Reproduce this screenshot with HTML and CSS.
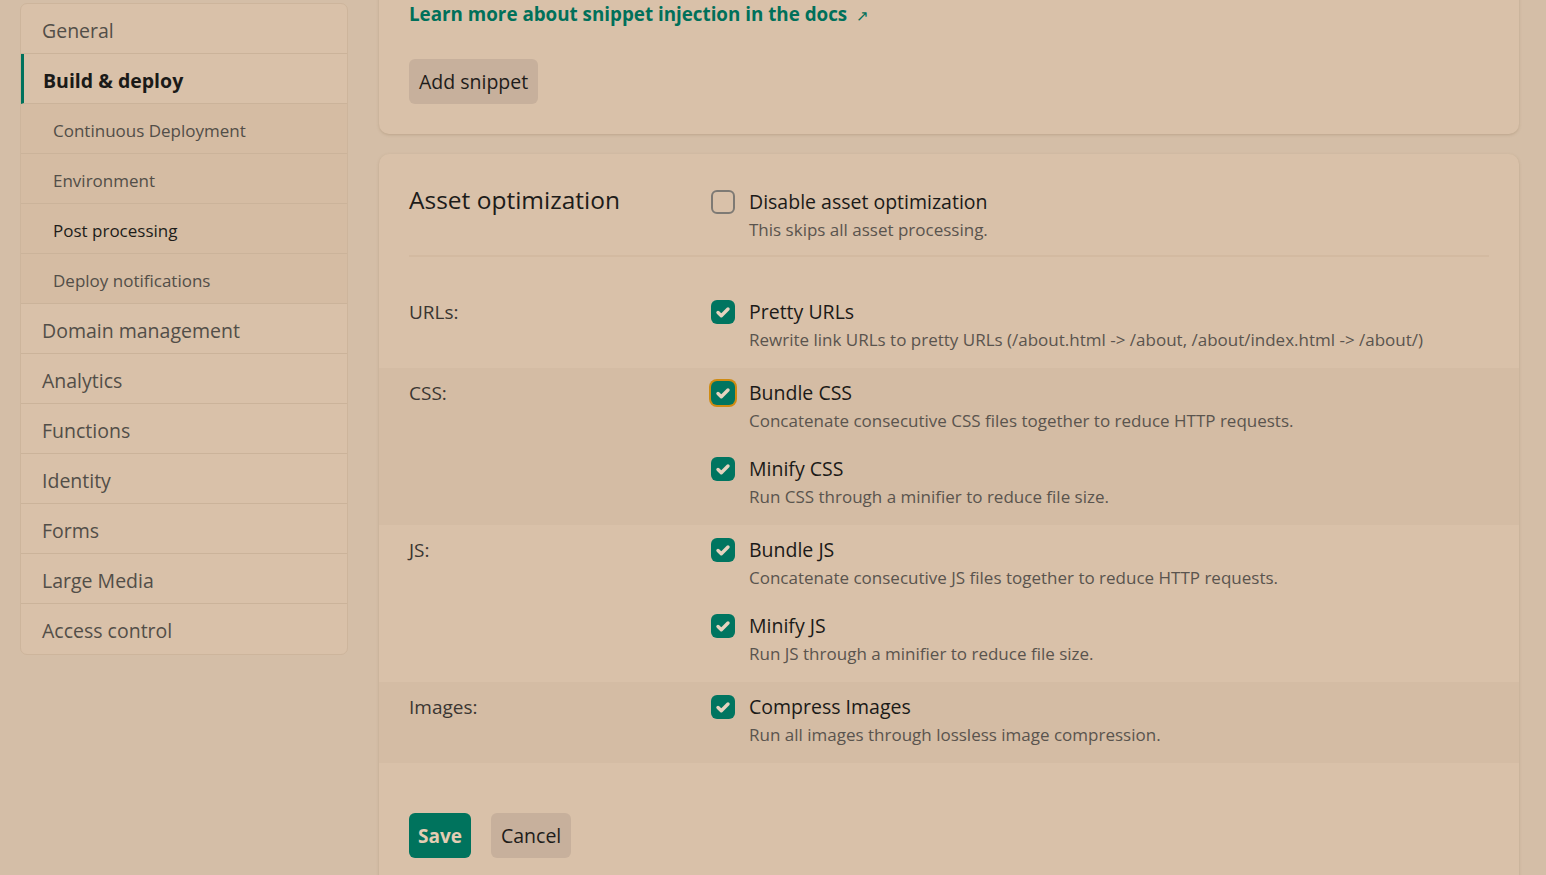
FILE: index.html
```html
<!DOCTYPE html>
<html lang="en">
<head>
<meta charset="utf-8">
<title>Build & deploy settings</title>
<link rel="stylesheet" href="styles.css">
</head>
<body>
<div class="layout">
  <nav class="sidebar">
    <a class="nav-item">General</a>
    <a class="nav-item active">Build &amp; deploy</a>
    <a class="nav-sub">Continuous Deployment</a>
    <a class="nav-sub">Environment</a>
    <a class="nav-sub current">Post processing</a>
    <a class="nav-sub">Deploy notifications</a>
    <a class="nav-item">Domain management</a>
    <a class="nav-item">Analytics</a>
    <a class="nav-item">Functions</a>
    <a class="nav-item">Identity</a>
    <a class="nav-item">Forms</a>
    <a class="nav-item">Large Media</a>
    <a class="nav-item last">Access control</a>
  </nav>
  <main class="main">
    <section class="card card-top">
      <a class="doc-link">Learn more about snippet injection in the docs <span class="arrow">↗</span></a>
      <div class="btn-row"><button class="btn btn-secondary">Add snippet</button></div>
    </section>
    <section class="card card-assets">
      <div class="title-row">
        <h2 class="card-title">Asset optimization</h2>
        <div class="option title-option">
          <span class="checkbox unchecked"></span>
          <div class="option-text">
            <div class="option-label">Disable asset optimization</div>
            <div class="option-desc">This skips all asset processing.</div>
          </div>
        </div>
      </div>
      <div class="divider"></div>
      <div class="group">
        <div class="group-label">URLs:</div>
        <div class="group-options">
          <div class="option">
            <span class="checkbox checked"><svg viewBox="0 0 24 24"><path d="M7 12.5l3.3 3.3L17 9" /></svg></span>
            <div class="option-text">
              <div class="option-label">Pretty URLs</div>
              <div class="option-desc">Rewrite link URLs to pretty URLs (/about.html -&gt; /about, /about/index.html -&gt; /about/)</div>
            </div>
          </div>
        </div>
      </div>
      <div class="group shaded">
        <div class="group-label">CSS:</div>
        <div class="group-options">
          <div class="option">
            <span class="checkbox checked focused"><svg viewBox="0 0 24 24"><path d="M7 12.5l3.3 3.3L17 9" /></svg></span>
            <div class="option-text">
              <div class="option-label">Bundle CSS</div>
              <div class="option-desc">Concatenate consecutive CSS files together to reduce HTTP requests.</div>
            </div>
          </div>
          <div class="option">
            <span class="checkbox checked"><svg viewBox="0 0 24 24"><path d="M7 12.5l3.3 3.3L17 9" /></svg></span>
            <div class="option-text">
              <div class="option-label">Minify CSS</div>
              <div class="option-desc">Run CSS through a minifier to reduce file size.</div>
            </div>
          </div>
        </div>
      </div>
      <div class="group">
        <div class="group-label">JS:</div>
        <div class="group-options">
          <div class="option">
            <span class="checkbox checked"><svg viewBox="0 0 24 24"><path d="M7 12.5l3.3 3.3L17 9" /></svg></span>
            <div class="option-text">
              <div class="option-label">Bundle JS</div>
              <div class="option-desc">Concatenate consecutive JS files together to reduce HTTP requests.</div>
            </div>
          </div>
          <div class="option">
            <span class="checkbox checked"><svg viewBox="0 0 24 24"><path d="M7 12.5l3.3 3.3L17 9" /></svg></span>
            <div class="option-text">
              <div class="option-label">Minify JS</div>
              <div class="option-desc">Run JS through a minifier to reduce file size.</div>
            </div>
          </div>
        </div>
      </div>
      <div class="group shaded">
        <div class="group-label">Images:</div>
        <div class="group-options">
          <div class="option">
            <span class="checkbox checked"><svg viewBox="0 0 24 24"><path d="M7 12.5l3.3 3.3L17 9" /></svg></span>
            <div class="option-text">
              <div class="option-label">Compress Images</div>
              <div class="option-desc">Run all images through lossless image compression.</div>
            </div>
          </div>
        </div>
      </div>
      <div class="actions">
        <button class="btn btn-primary">Save</button>
        <button class="btn btn-secondary">Cancel</button>
      </div>
    </section>
  </main>
</div>
</body>
</html>
```

FILE: styles.css
```css
* { box-sizing: border-box; }
html, body { margin: 0; padding: 0; }
body {
  background: #d4bea7;
  font-family: "Open Sans", "Noto Sans", sans-serif;
  color: #1e1c1a;
  height: 875px;
  overflow: hidden;
}
.layout {
  display: flex;
  align-items: flex-start;
  gap: 31px;
  padding: 0 27px 0 20px;
}
.sidebar {
  width: 328px;
  flex: none;
  margin-top: 3px;
  background: #d9c1a9;
  border: 1px solid #cdb59c;
  border-radius: 7px;
  display: flex;
  flex-direction: column;
  overflow: hidden;
}
.nav-item, .nav-sub {
  display: flex;
  align-items: center;
  height: 50px;
  padding-top: 3px;
  border-bottom: 1px solid #cbb39a;
  color: #524e48;
  text-decoration: none;
}
.nav-item {
  padding-left: 21px;
  font-size: 19.5px;
  font-weight: 500;
}
.nav-item.last { border-bottom: none; }
.nav-item.active {
  font-weight: 700;
  color: #1a1a18;
  border-left: 3px solid #00725c;
  padding-left: 19px;
}
.nav-sub {
  padding-left: 32px;
  font-size: 17px;
  font-weight: 500;
  background: #d5bca3;
}
.nav-sub.current { color: #1d1c1a; }

.main {
  flex: 1;
  display: flex;
  flex-direction: column;
  gap: 20px;
}
.card {
  background: #d9c1a9;
  border-radius: 10px;
  box-shadow: 0 1px 3px rgba(120, 90, 60, 0.25);
  overflow: hidden;
}
.card-top {
  margin-top: -30px;
  padding: 30px;
}
.doc-link {
  display: inline-block;
  color: #00705a;
  font-weight: 700;
  font-size: 18.8px;
  line-height: 28px;
  text-decoration: none;
}
.arrow { font-weight: 400; font-size: 15px; margin-left: 4px; }
.btn-row { margin-top: 30px; }
.btn {
  font-family: inherit;
  border: none;
  border-radius: 6px;
  height: 45px;
  padding: 0 10px;
  font-size: 19.5px;
  cursor: pointer;
}
.btn-secondary {
  background: #c7b09c;
  color: #1e1c1a;
}
.btn-primary {
  background: #00735d;
  color: #e4cdb4;
  font-weight: 700;
  font-size: 19px;
  padding: 0 9px;
}
.card-assets {
  padding: 30px 0 60px;
}
.title-row {
  display: flex;
  padding: 0 30px;
}
.card-title {
  margin: 0;
  width: 302px;
  flex: none;
  font-size: 24.5px;
  font-weight: 400;
  line-height: 32px;
  color: #1d1c1a;
}
.title-option { margin-top: 4px; }
.divider {
  height: 2px;
  background: #d3baa1;
  margin: 11px 30px 30px;
}
.group {
  display: flex;
  padding: 11px 30px 14px;
}
.group.shaded { background: #d4bca4; }
.group-label {
  width: 302px;
  flex: none;
  font-size: 19px;
  font-weight: 400;
  color: #3a3632;
  line-height: 28px;
}
.group-options {
  display: flex;
  flex-direction: column;
  gap: 20px;
}
.option {
  display: flex;
  gap: 14px;
}
.checkbox {
  width: 24px;
  height: 24px;
  flex: none;
  margin-top: 2px;
  border-radius: 6px;
  display: flex;
  align-items: center;
  justify-content: center;
}
.checkbox.unchecked {
  border: 2.5px solid #7e7a74;
  background: transparent;
}
.checkbox.checked { background: #007560; }
.checkbox.focused { box-shadow: 0 0 0 2px #cf8b12; }
.checkbox svg { width: 24px; height: 24px; }
.checkbox svg path {
  fill: none;
  stroke: #e6d3bf;
  stroke-width: 3.4;
  stroke-linecap: round;
  stroke-linejoin: round;
}
.option-label {
  font-size: 19.5px;
  font-weight: 500;
  line-height: 28px;
  color: #1b1a18;
}
.option-desc {
  font-size: 17px;
  font-weight: 400;
  line-height: 28px;
  color: #5a544e;
}
.actions {
  display: flex;
  gap: 20px;
  padding: 50px 30px 0;
}
```
